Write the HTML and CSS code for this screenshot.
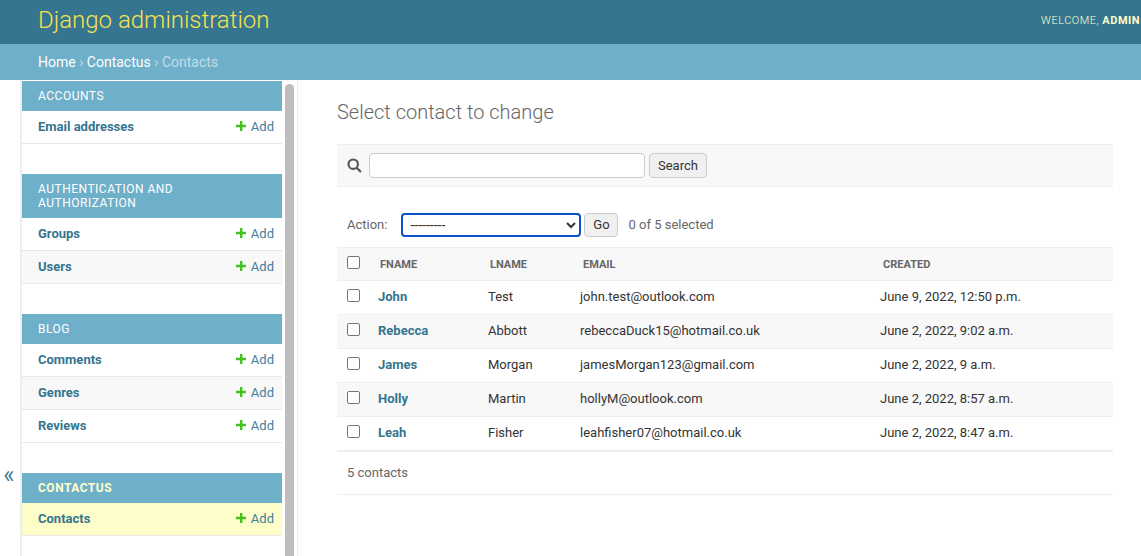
FILE: index.html
```html
<!DOCTYPE html>
<html lang="en">
<head>
    <meta charset="UTF-8">
    <meta name="viewport" content="width=device-width, initial-scale=1.0">
    <title>Select contact to change | Django site admin</title>
    <link rel="stylesheet" href="styles.css">
</head>
<body>

<header class="site-header">
    <h1 class="branding"><a href="#">Django administration</a></h1>
    <div class="user-tools">Welcome, <strong>admin</strong></div>
</header>

<nav class="breadcrumbs">
    <a href="#">Home</a> › <a href="#">Contactus</a> › <span class="crumb-current">Contacts</span>
</nav>

<div class="main">
    <button class="sidebar-toggle" type="button">«</button>

    <aside class="nav-sidebar">
        <section class="module">
            <h2 class="caption">Accounts</h2>
            <div class="app-row"><a class="model-link" href="#">Email addresses</a><a class="add-link" href="#"><svg class="add-icon" viewBox="0 0 10 10"><path d="M4 0h2.4v3.8H10v2.4H6.4V10H4V6.2H0V3.8h4z"/></svg>Add</a></div>
        </section>
        <section class="module">
            <h2 class="caption">Authentication and Authorization</h2>
            <div class="app-row"><a class="model-link" href="#">Groups</a><a class="add-link" href="#"><svg class="add-icon" viewBox="0 0 10 10"><path d="M4 0h2.4v3.8H10v2.4H6.4V10H4V6.2H0V3.8h4z"/></svg>Add</a></div>
            <div class="app-row"><a class="model-link" href="#">Users</a><a class="add-link" href="#"><svg class="add-icon" viewBox="0 0 10 10"><path d="M4 0h2.4v3.8H10v2.4H6.4V10H4V6.2H0V3.8h4z"/></svg>Add</a></div>
        </section>
        <section class="module">
            <h2 class="caption">Blog</h2>
            <div class="app-row"><a class="model-link" href="#">Comments</a><a class="add-link" href="#"><svg class="add-icon" viewBox="0 0 10 10"><path d="M4 0h2.4v3.8H10v2.4H6.4V10H4V6.2H0V3.8h4z"/></svg>Add</a></div>
            <div class="app-row"><a class="model-link" href="#">Genres</a><a class="add-link" href="#"><svg class="add-icon" viewBox="0 0 10 10"><path d="M4 0h2.4v3.8H10v2.4H6.4V10H4V6.2H0V3.8h4z"/></svg>Add</a></div>
            <div class="app-row"><a class="model-link" href="#">Reviews</a><a class="add-link" href="#"><svg class="add-icon" viewBox="0 0 10 10"><path d="M4 0h2.4v3.8H10v2.4H6.4V10H4V6.2H0V3.8h4z"/></svg>Add</a></div>
        </section>
        <section class="module">
            <h2 class="caption caption-current">Contactus</h2>
            <div class="app-row row-current"><a class="model-link" href="#">Contacts</a><a class="add-link" href="#"><svg class="add-icon" viewBox="0 0 10 10"><path d="M4 0h2.4v3.8H10v2.4H6.4V10H4V6.2H0V3.8h4z"/></svg>Add</a></div>
        </section>
    </aside>

    <div class="sidebar-scroll"><div class="scroll-thumb"></div></div>

    <main class="content">
        <h1 class="page-title">Select contact to change</h1>

        <form class="toolbar">
            <svg class="search-icon" viewBox="0 0 14 14"><circle cx="5.8" cy="5.8" r="4.4"/><path d="M9 9l4 4"/></svg>
            <input class="search-input" type="text">
            <button class="btn" type="button">Search</button>
        </form>

        <div class="actions">
            <label class="action-label">Action:</label>
            <select class="action-select"><option>---------</option></select>
            <button class="btn btn-go" type="button">Go</button>
            <span class="action-counter">0 of 5 selected</span>
        </div>

        <table class="result-list">
            <thead>
                <tr>
                    <th class="col-check"><span class="checkbox"></span></th>
                    <th class="col-fname">Fname</th>
                    <th class="col-lname">Lname</th>
                    <th class="col-email">Email</th>
                    <th class="col-created">Created</th>
                </tr>
            </thead>
            <tbody>
                <tr>
                    <td><span class="checkbox"></span></td>
                    <td><a class="row-link" href="#">John</a></td>
                    <td>Test</td>
                    <td>john.test@outlook.com</td>
                    <td>June 9, 2022, 12:50 p.m.</td>
                </tr>
                <tr>
                    <td><span class="checkbox"></span></td>
                    <td><a class="row-link" href="#">Rebecca</a></td>
                    <td>Abbott</td>
                    <td>rebeccaDuck15@hotmail.co.uk</td>
                    <td>June 2, 2022, 9:02 a.m.</td>
                </tr>
                <tr>
                    <td><span class="checkbox"></span></td>
                    <td><a class="row-link" href="#">James</a></td>
                    <td>Morgan</td>
                    <td>jamesMorgan123@gmail.com</td>
                    <td>June 2, 2022, 9 a.m.</td>
                </tr>
                <tr>
                    <td><span class="checkbox"></span></td>
                    <td><a class="row-link" href="#">Holly</a></td>
                    <td>Martin</td>
                    <td>hollyM@outlook.com</td>
                    <td>June 2, 2022, 8:57 a.m.</td>
                </tr>
                <tr>
                    <td><span class="checkbox"></span></td>
                    <td><a class="row-link" href="#">Leah</a></td>
                    <td>Fisher</td>
                    <td>leahfisher07@hotmail.co.uk</td>
                    <td>June 2, 2022, 8:47 a.m.</td>
                </tr>
            </tbody>
        </table>

        <p class="paginator">5 contacts</p>
    </main>
</div>

</body>
</html>
```

FILE: styles.css
```css
/* Reset */
* {
    margin: 0;
    padding: 0;
    box-sizing: border-box;
}

html, body {
    height: 100%;
    overflow: hidden;
}

body {
    font-family: Roboto, "Liberation Sans", sans-serif;
    font-size: 14px;
    color: #333;
    background: #fff;
}

a {
    text-decoration: none;
}

/* Header */
.site-header {
    height: 44px;
    background: #35758f;
    display: flex;
    justify-content: space-between;
    align-items: center;
    padding: 0 0 4px 38px;
}

.branding {
    font-size: 24px;
    font-weight: 300;
    line-height: 40px;
}

.branding a {
    color: #f7e14f;
}

.user-tools {
    font-size: 11px;
    font-weight: 300;
    letter-spacing: 0.5px;
    text-transform: uppercase;
    color: #ffc;
    white-space: nowrap;
    margin-right: 1px;
}

.user-tools strong {
    font-weight: 700;
}

/* Breadcrumbs */
.breadcrumbs {
    height: 36px;
    background: #6eafca;
    color: #c4dce8;
    padding-left: 38px;
    line-height: 36px;
    font-size: 14px;
}

.breadcrumbs a {
    color: #fff;
}

/* Main layout */
.main {
    display: flex;
    height: 476px;
}

.sidebar-toggle {
    width: 20px;
    flex: none;
    border: 0;
    background: #fff;
    color: #447e9b;
    font-family: Roboto, sans-serif;
    font-size: 24px;
    padding-top: 314px;
    padding-right: 2px;
}

.nav-sidebar {
    width: 262px;
    flex: none;
    border-left: 2px solid #eee;
    padding-top: 1px;
}

.module {
    margin-bottom: 30px;
}

.caption {
    background: #6eafca;
    color: #fff;
    font-size: 12px;
    font-weight: 400;
    letter-spacing: 0.5px;
    line-height: 14px;
    text-transform: uppercase;
    padding: 8px 16px;
}

.caption-current {
    color: #ffc;
    font-weight: 700;
}

.app-row {
    height: 33px;
    display: flex;
    justify-content: space-between;
    align-items: center;
    padding: 0 8px 2px 16px;
    border-bottom: 1px solid #e8e8e8;
    font-size: 13px;
}

.app-row:nth-of-type(even) {
    background: #f8f8f8;
}

.app-row.row-current {
    background: #fcfdc8;
}

.model-link {
    color: #35758f;
    font-weight: 700;
}

.add-link {
    color: #447e9b;
    display: flex;
    align-items: center;
}

.add-icon {
    width: 10px;
    height: 10px;
    margin-right: 5px;
    fill: #43c21f;
}

.sidebar-scroll {
    width: 16px;
    flex: none;
    padding: 4px 3px 0 3px;
    border-right: 1px solid #eee;
}

.scroll-thumb {
    height: 100%;
    background: #bdbdbd;
    border-radius: 5px 5px 0 0;
}

/* Content */
.content {
    flex: 1;
    padding: 19px 28px 0 39px;
    min-width: 0;
}

.page-title {
    font-size: 20px;
    font-weight: 300;
    color: #666;
    line-height: 26px;
    margin-bottom: 19px;
}

.toolbar {
    height: 43px;
    display: flex;
    align-items: center;
    background: #f8f8f8;
    border-top: 1px solid #eee;
    border-bottom: 1px solid #eee;
    padding-left: 10px;
}

.search-icon {
    width: 15px;
    height: 15px;
    margin-right: 7px;
    fill: none;
    stroke: #555;
    stroke-width: 2;
}

.search-input {
    width: 276px;
    height: 25px;
    border: 1px solid #ccc;
    border-radius: 4px;
    background: #fff;
}

.btn {
    height: 25px;
    padding: 0 8px;
    margin-left: 4px;
    font-family: Roboto, sans-serif;
    font-size: 13px;
    color: #333;
    background: #f0f0f0;
    border: 1px solid #ccc;
    border-radius: 4px;
}

.actions {
    display: flex;
    align-items: center;
    height: 60px;
    padding: 15px 0 0 10px;
    font-size: 13px;
    color: #666;
}

.action-label {
    margin-right: 14px;
}

.action-select {
    width: 180px;
    height: 24px;
    border: 2px solid #0b50c8;
    border-radius: 4px;
    padding-left: 3px;
    background: #fff;
    font-family: Roboto, sans-serif;
    font-size: 14px;
    color: #333;
}

.btn-go {
    height: 24px;
    width: 34px;
    padding: 0;
    margin-left: 3px;
}

.action-counter {
    margin-left: 10px;
}

/* Results table */
.result-list {
    width: 776px;
    table-layout: fixed;
    border-collapse: collapse;
    font-size: 13px;
}

.col-check {
    width: 31px;
}

.col-fname {
    width: 110px;
}

.col-lname {
    width: 92px;
}

.col-email {
    width: 300px;
}

.result-list th {
    height: 33px;
    background: #f8f8f8;
    border-top: 1px solid #eee;
    border-bottom: 1px solid #eee;
    color: #666;
    font-size: 11px;
    font-weight: 700;
    text-align: left;
    text-transform: uppercase;
    padding: 0 0 0 12px;
}

.result-list th.col-email,
.result-list th.col-created {
    padding-left: 13px;
}

.result-list td {
    height: 34px;
    border-bottom: 1px solid #eee;
    padding: 0 0 2px 10px;
    color: #333;
}

.result-list tbody tr:nth-child(even) td {
    background: #f8f8f8;
}

.result-list tbody tr:last-child td {
    border-bottom-width: 2px;
}

.result-list th.col-check {
    padding-left: 10px;
}

.checkbox {
    display: block;
    width: 13px;
    height: 13px;
    border: 1px solid #767676;
    border-radius: 2px;
    background: #fff;
    margin-bottom: 2px;
}

.result-list th .checkbox {
    margin-bottom: 4px;
}

.row-link {
    color: #35758f;
    font-weight: 700;
}

.paginator {
    height: 43px;
    line-height: 41px;
    padding-left: 10px;
    font-size: 13px;
    color: #666;
    border-bottom: 1px solid #eee;
}
```
